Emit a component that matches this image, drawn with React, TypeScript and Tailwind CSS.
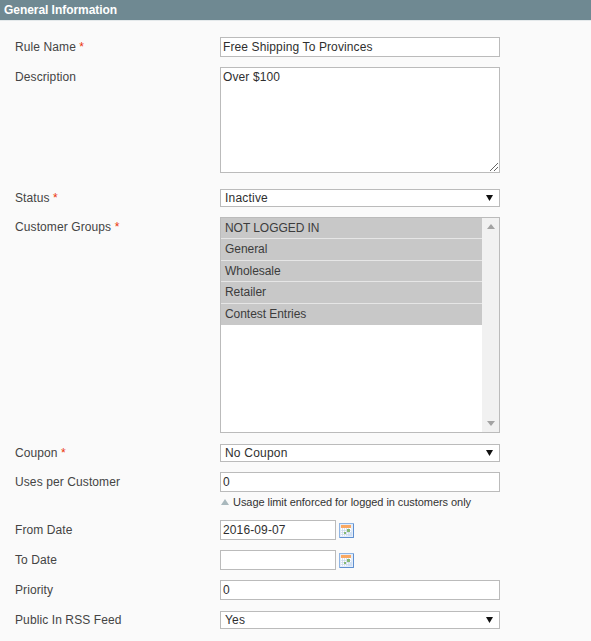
import { ReactNode } from "react";

const groups = ["NOT LOGGED IN", "General", "Wholesale", "Retailer", "Contest Entries"];

const Required = () => <span className="text-[#eb340a]"> *</span>;

const Row = ({ label, required, className, labelClass, children }: { label: string; required?: boolean; className?: string; labelClass?: string; children: ReactNode }) => (
  <div className={`flex ${className ?? ""}`}>
    <div className={`w-[205px] shrink-0 leading-[16px] tracking-[0.1px] ${labelClass ?? "pt-[2px]"}`}>
      {label}
      {required && <Required />}
    </div>
    <div className="w-[280px]">{children}</div>
  </div>
);

const TextBox = ({ value }: { value?: string }) => (
  <div className="h-[20px] border border-[#bbbbbb] bg-white pl-[2px] pr-[3px] text-[12px] leading-[18px] tracking-[0.12px] text-[#2f2f2f]">{value}</div>
);

const SelectBox = ({ value }: { value: string }) => (
  <div className="flex h-[18px] items-center justify-between border border-[#bbbbbb] bg-white pl-[4px] pr-[5px] leading-[16px] tracking-[0.2px] text-[#2f2f2f]">
    <span>{value}</span>
    <svg width="7" height="6" viewBox="0 0 7 6" className="mr-[1px]">
      <path d="M0 0H7L3.5 6Z" fill="#111" />
    </svg>
  </div>
);

const CalendarIcon = () => (
  <svg width="15" height="15" viewBox="0 0 15 15" className="ml-[3px] mt-[3px]">
    <rect x="0.5" y="0.5" width="14" height="14" fill="#e3edf9" stroke="#8fb4e3" />
    <rect x="2" y="2" width="10" height="3" fill="#f9a862" />
    <rect x="2" y="5" width="10" height="8" fill="#fff" />
    <path d="M2 7.5H12M2 9.5H12M2 11.5H10M3.5 5V13M5.5 5V13M7.5 5V13M9.5 5V13" stroke="#c9d7ea" strokeWidth="0.7" />
    <rect x="8" y="6" width="3" height="3" fill="#86b974" />
    <rect x="5" y="9" width="2" height="2" fill="#86b974" />
    <path d="M13 13L8 13L13 8Z" fill="#cfdff4" />
    <path d="M14.5 1V14.5H1" fill="none" stroke="#5f8fcf" />
  </svg>
);

const DateBox = ({ value }: { value?: string }) => (
  <div className="flex">
    <div className="h-[20px] w-[116px] border border-[#bbbbbb] bg-white pl-[2px] pr-[3px] leading-[18px] tracking-[0.12px] text-[#2f2f2f]">{value}</div>
    <CalendarIcon />
  </div>
);

const App = () => {
  return (
    <div className="h-[641px] w-[591px] overflow-hidden bg-[#fafafa] font-['Liberation_Sans',Arial,sans-serif] text-[12px] text-[#444444]">
      {/* Section header */}
      <div className="h-[21px] border-b border-[#e4e9eb] bg-[#6f8992] pl-[4px] text-[12px] font-bold leading-[20px] tracking-[-0.05px] text-white">
        General Information
      </div>

      <div className="pl-[15px]">
        <Row label="Rule Name" required className="mt-[16px]">
          <TextBox value="Free Shipping To Provinces" />
        </Row>

        <Row label="Description" className="mt-[10px]">
          <div className="relative h-[106px] border border-[#bbbbbb] bg-white pl-[2px] pr-[3px] pt-[1px] leading-[16px] tracking-[0.12px] text-[#2f2f2f]">
            Over $100
            <svg width="8" height="8" viewBox="0 0 8 8" className="absolute bottom-[1px] right-[1px]">
              <path d="M0 8L8 0M4 8L8 4" stroke="#666" strokeWidth="1" />
            </svg>
          </div>
        </Row>

        <Row label="Status" required labelClass="pt-[1px]" className="mt-[16px]">
          <SelectBox value="Inactive" />
        </Row>

        <Row label="Customer Groups" required className="mt-[10px]">
          <div className="flex h-[216px] border border-[#bbbbbb] bg-white">
            <div className="flex-1">
              {groups.map((g) => (
                <div key={g} className="h-[21.4px] border-b border-[#e6e6e6] bg-[#c8c8c8] pl-[4px] leading-[20px] tracking-[-0.05px] text-[#3c3c3c] last:border-b-0">
                  {g}
                </div>
              ))}
            </div>
            <div className="flex w-[17px] flex-col items-center justify-between bg-[#f1f1f1] py-[6px]">
              <svg width="8" height="5" viewBox="0 0 8 5"><path d="M4 0L8 5H0Z" fill="#a3a3a3" /></svg>
              <svg width="8" height="5" viewBox="0 0 8 5"><path d="M0 0H8L4 5Z" fill="#a3a3a3" /></svg>
            </div>
          </div>
        </Row>

        <Row label="Coupon" required labelClass="pt-[1px]" className="mt-[11px]">
          <SelectBox value="No Coupon" />
        </Row>

        <Row label="Uses per Customer" className="mt-[10px]">
          <TextBox value="0" />
          <div className="mt-[1px] flex h-[18px] items-center text-[11px] tracking-[-0.06px] text-[#333333]">
            <svg width="8" height="6" viewBox="0 0 8 6" className="ml-[1px] mr-[4px]">
              <path d="M4 0L8 6H0Z" fill="#a9b8bd" />
            </svg>
            Usage limit enforced for logged in customers only
          </div>
        </Row>

        <Row label="From Date" className="mt-[9px]">
          <DateBox value="2016-09-07" />
        </Row>

        <Row label="To Date" className="mt-[10px]">
          <DateBox />
        </Row>

        <Row label="Priority" className="mt-[10px]">
          <TextBox value="0" />
        </Row>

        <Row label="Public In RSS Feed" labelClass="pt-[1px]" className="mt-[11px]">
          <SelectBox value="Yes" />
        </Row>
      </div>
    </div>
  );
};

export default App;
